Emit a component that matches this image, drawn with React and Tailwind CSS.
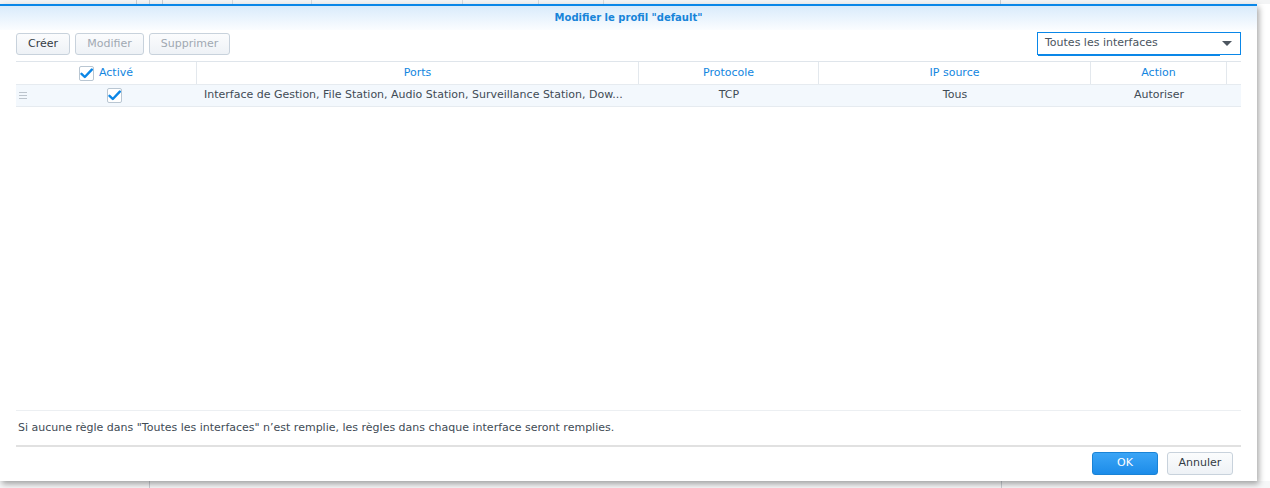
import React from 'react';

const columns = [
  { key: 'enabled', label: 'Activé', width: 'w-[181px]' },
  { key: 'ports', label: 'Ports', width: 'w-[442px]' },
  { key: 'proto', label: 'Protocole', width: 'w-[180px]' },
  { key: 'ip', label: 'IP source', width: 'w-[272px]' },
  { key: 'action', label: 'Action', width: 'w-[136px]' },
];

function Check() {
  return (
    <span className="inline-flex items-center justify-center w-[15px] h-[15px] bg-white border border-[#b9c6d2] rounded-[2px]">
      <svg width="13" height="11" viewBox="0 0 13 11">
        <path d="M1.5 5.8 L4.8 9 L11.8 1.6" fill="none" stroke="#0b86e6" strokeWidth="2.4" strokeLinecap="round" strokeLinejoin="round" />
      </svg>
    </span>
  );
}

function Btn({ children, disabled, w }) {
  return (
    <button className={`${w} h-[22px] rounded-[3px] border border-[#c8d2dc] bg-gradient-to-b from-[#fbfcfd] to-[#eef2f6] text-[11px] ${disabled ? 'text-[#a0a9b2]' : 'text-[#333b44]'}`}>
      {children}
    </button>
  );
}

export default function App() {
  return (
    <div className="relative w-[1270px] h-[488px] overflow-hidden bg-white text-[11px] text-[#414b55]" style={{ fontFamily: '"DejaVu Sans", Verdana, sans-serif' }}>
      {/* page behind the dialog */}
      <div className="flex h-[4px] bg-[#f3f4f5]">
        <div className="w-[137px] border-r border-[#c9ced3]" />
        <div className="w-[13px] border-r border-[#c9ced3]" />
        <div className="w-[13px] border-r border-[#c9ced3]" />
        <div className="w-[70px] border-r border-[#d6dadd]" />
        <div className="w-[79px] border-r border-[#d6dadd]" />
        <div className="w-[151px] border-r border-[#d6dadd]" />
        <div className="w-[76px] border-r border-[#d6dadd]" />
        <div className="w-[65px] border-r border-[#d6dadd]" />
        <div className="w-[397px] border-r border-[#c9ced3]" />
      </div>
      <div className="absolute left-0 bottom-0 flex w-full h-[7px] bg-[#f6f7f8]">
        <div className="w-[150px] border-r border-[#c9ced3]" />
        <div className="w-[852px] border-r border-[#c9ced3]" />
      </div>

      {/* dialog */}
      <div className="absolute left-0 top-[4px] w-[1257px] h-[477px] flex flex-col bg-white border-t-2 border-[#0a87e8] shadow-[2px_3px_6px_rgba(0,0,0,0.35)]">
        <div className="h-[24px] shrink-0 bg-gradient-to-b from-[#d9ebfb] to-[#fbfdff] text-center leading-[24px] text-[10px] font-bold text-[#1784d9]">
          Modifier le profil "default"
        </div>

        <div className="flex justify-between items-start pl-4 pr-4 pt-[2px] h-[31px] shrink-0">
          <div className="flex gap-[5px] mt-[1px]">
            <Btn w="w-[54px]">Créer</Btn>
            <Btn w="w-[69px]" disabled>Modifier</Btn>
            <Btn w="w-[81px]" disabled>Supprimer</Btn>
          </div>
          <div className="relative w-[204px] h-[23px] border border-[#0a87e8] flex items-center pl-[7px] text-[#4a545e]">
            Toutes les interfaces
            <svg className="absolute right-[8px] top-[8px]" width="10" height="5" viewBox="0 0 10 5">
              <path d="M0 0 H10 L5 5 Z" fill="#4d5660" />
            </svg>
            <div className="absolute left-0 bottom-[-2px] w-[182px] h-[1px] bg-[#0a87e8]" />
          </div>
        </div>

        <div className="mx-4 h-[349px] shrink-0 border-t border-[#dfe5eb]">
          <div className="flex h-[23px] border-b border-[#e6ebf0] text-[#1286e0]">
            {columns.map((c) => (
              <div key={c.key} className={`${c.width} flex items-center justify-center gap-[5px] pt-[1px] border-r border-[#e3e8ed]`}>
                {c.key === 'enabled' && <Check />}
                {c.label}
              </div>
            ))}
          </div>
          <div className="flex h-[22px] bg-[#f3f8fd] border-b border-[#e6ebf0]">
            <div className="w-[181px] flex items-center">
              <div className="w-[14px] flex justify-end pr-[3px]">
                <svg width="8" height="7" viewBox="0 0 8 7">
                  <path d="M0 0.5 H8 M0 3.5 H8 M0 6.5 H8" stroke="#bcc4cc" strokeWidth="1" />
                </svg>
              </div>
              <div className="flex-1 flex justify-center pl-[1px]">
                <Check />
              </div>
            </div>
            <div className="w-[442px] flex items-center pl-[7px] whitespace-nowrap overflow-hidden">
              Interface de Gestion, File Station, Audio Station, Surveillance Station, Dow...
            </div>
            <div className="w-[180px] flex items-center justify-center">TCP</div>
            <div className="w-[272px] flex items-center justify-center">Tous</div>
            <div className="w-[136px] flex items-center justify-center">Autoriser</div>
          </div>
        </div>

        <div className="mx-4 h-[37px] shrink-0 border-t border-[#eceff2] border-b-2 border-b-[#e1e1e1] flex items-center pl-[2px]">
          Si aucune règle dans "Toutes les interfaces" n’est remplie, les règles dans chaque interface seront remplies.
        </div>

        <div className="flex justify-end gap-[9px] pr-[24px] pt-[5px]">
          <button className="w-[66px] h-[23px] rounded-[3px] border border-[#1a83d6] bg-gradient-to-b from-[#3ba5f6] to-[#1b8ce9] text-white text-[11px]">OK</button>
          <button className="w-[66px] h-[23px] rounded-[3px] border border-[#c8d2dc] bg-gradient-to-b from-[#fbfcfd] to-[#eef2f6] text-[#333b44] text-[11px]">Annuler</button>
        </div>
      </div>
    </div>
  );
}
